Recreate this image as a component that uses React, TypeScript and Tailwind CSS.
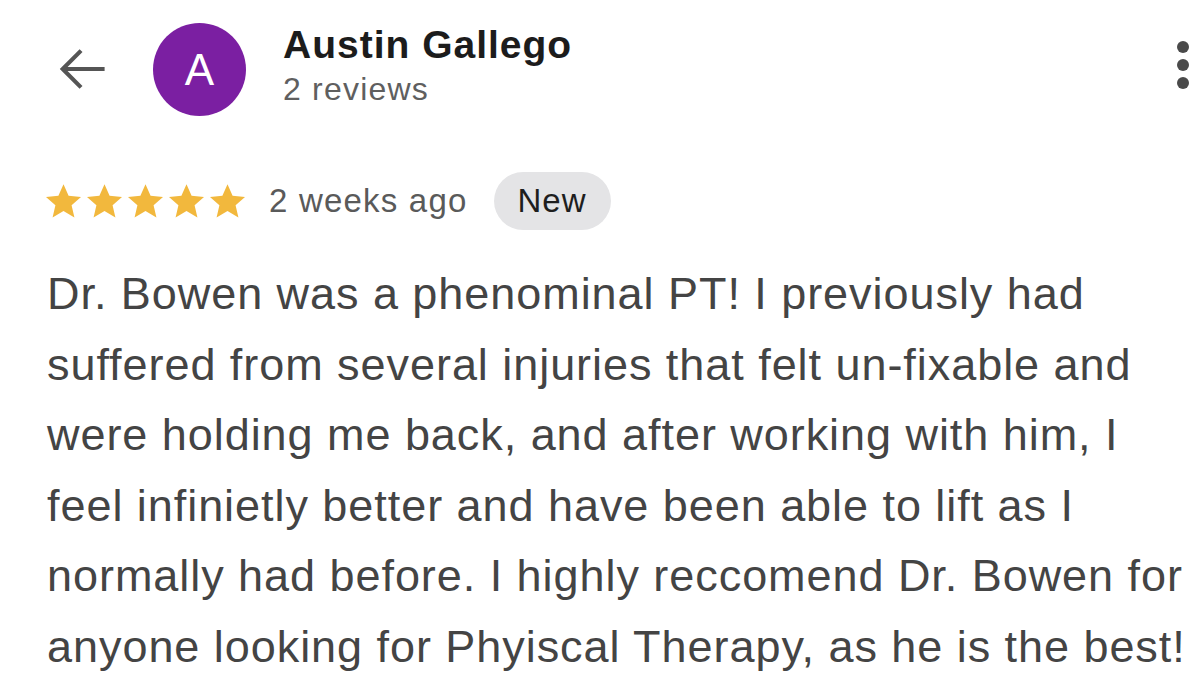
import React from "react";

function Star() {
  return (
    <svg width="35" height="34" viewBox="1.5 1.8 21 20" className="shrink-0">
      <path
        d="M12 1.8l3.05 6.9 7.45.7-5.65 4.95 1.7 7.35L12 17.85 5.45 21.7l1.7-7.35L1.5 9.4l7.45-.7z"
        fill="#F2B83D"
      />
    </svg>
  );
}

const lines = [
  "Dr. Bowen was a phenominal PT! I previously had",
  "suffered from several injuries that felt un-fixable and",
  "were holding me back, and after working with him, I",
  "feel infinietly better and have been able to lift as I",
  "normally had before. I highly reccomend Dr. Bowen for",
  "anyone looking for Phyiscal Therapy, as he is the best!",
];

export default function App() {
  const font = { fontFamily: '"Liberation Sans", Arial, Helvetica, sans-serif' };
  return (
    <div className="w-[1200px] h-[693px] bg-white overflow-hidden relative" style={font}>
      <div className="flex items-start pl-[53px] pt-[23px]">
        <svg width="58" height="58" viewBox="0 0 24 24" className="mt-[17px] shrink-0">
          <path d="M20.5 12H4.5M11 5l-7 7 7 7" stroke="#555" strokeWidth="1.7" fill="none" strokeLinecap="square" />
        </svg>
        <div className="ml-[42px] w-[93px] h-[93px] rounded-full bg-[#7B1FA2] flex items-center justify-center text-white text-[44px] leading-none shrink-0">
          A
        </div>
        <div className="ml-[37px] flex flex-col">
          <div className="text-[39px] font-bold text-[#1c1c1c] leading-[44px] tracking-[1px]">Austin Gallego</div>
          <div className="text-[32px] text-[#5f5f5f] leading-[40px] mt-[2px] tracking-[1.2px]">2 reviews</div>
        </div>
        <div className="ml-auto mr-[11px] mt-[18px] flex flex-col gap-[6px]">
          <div className="w-[12px] h-[12px] rounded-full bg-[#4a4a4a]" />
          <div className="w-[12px] h-[12px] rounded-full bg-[#4a4a4a]" />
          <div className="w-[12px] h-[12px] rounded-full bg-[#4a4a4a]" />
        </div>
      </div>
      <div className="flex items-center pl-[46px] mt-[56px]">
        <div className="flex gap-[6px]">
          <Star /><Star /><Star /><Star /><Star />
        </div>
        <div className="ml-[24px] text-[33px] text-[#5a5a5a] tracking-[1.2px]">2 weeks ago</div>
        <div className="ml-[26px] h-[58px] px-[24px] rounded-full bg-[#e4e4e6] flex items-center text-[33px] font-medium text-[#1e1e1e] tracking-[1px]">
          New
        </div>
      </div>
      <div className="pl-[47px] mt-[29px] text-[45px] leading-[70.6px] text-[#444] tracking-[0.95px]">
        {lines.map((l) => (
          <div key={l} className="whitespace-nowrap">{l}</div>
        ))}
      </div>
    </div>
  );
}
